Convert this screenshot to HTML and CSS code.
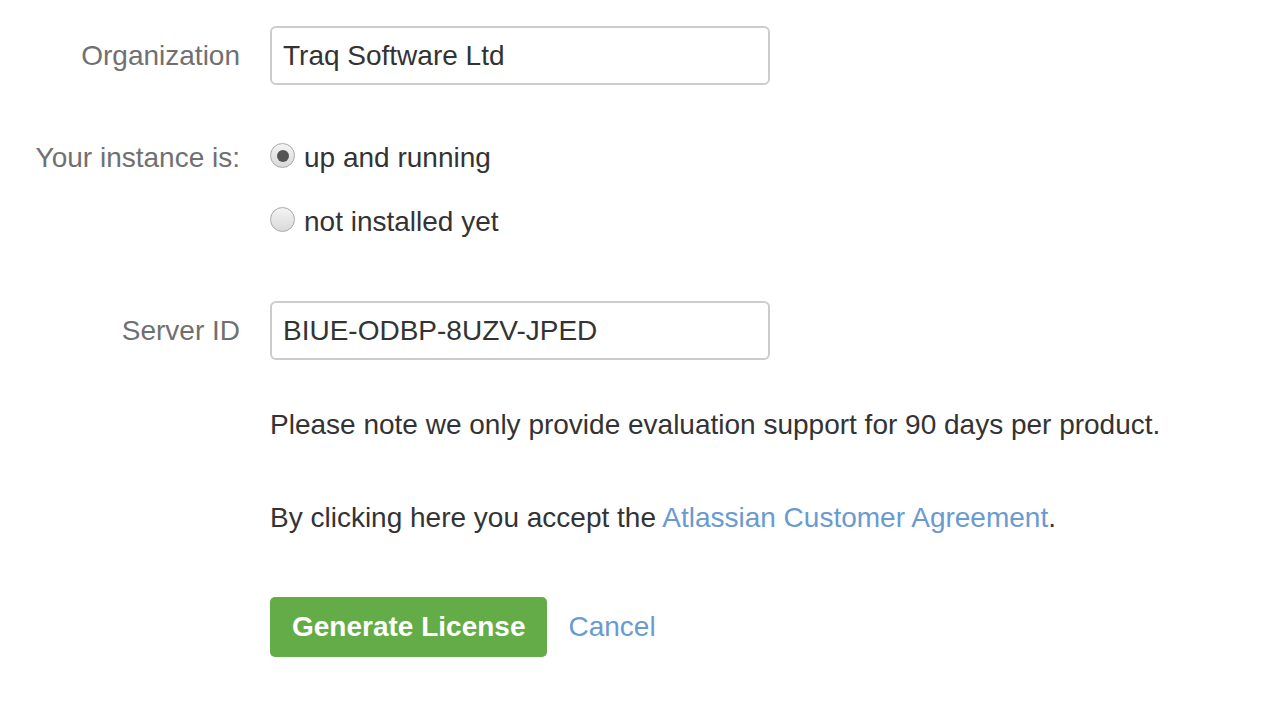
FILE: index.html
```html
<!DOCTYPE html>
<html>
<head>
<meta charset="utf-8">
<link rel="stylesheet" href="styles.css">
</head>
<body>
<form class="form">
  <div class="row row-org">
    <label class="label">Organization</label>
    <div class="field"><input class="input" type="text" value="Traq Software Ltd"></div>
  </div>
  <div class="row row-instance">
    <label class="label label-radio">Your instance is:</label>
    <div class="field radios">
      <label class="radio"><span class="dot checked"></span><span>up and running</span></label>
      <label class="radio"><span class="dot"></span><span>not installed yet</span></label>
    </div>
  </div>
  <div class="row row-server">
    <label class="label">Server ID</label>
    <div class="field"><input class="input" type="text" value="BIUE-ODBP-8UZV-JPED"></div>
  </div>
  <div class="row">
    <div class="label"></div>
    <div class="field">
      <p class="note">Please note we only provide evaluation support for 90 days per product.</p>
      <p class="note agree">By clicking here you accept the <a class="link" href="#">Atlassian Customer Agreement</a>.</p>
      <div class="actions">
        <button type="button" class="btn">Generate License</button>
        <a class="link cancel" href="#">Cancel</a>
      </div>
    </div>
  </div>
</form>
</body>
</html>
```
FILE: styles.css
```css
* { box-sizing: border-box; }
html, body { margin: 0; padding: 0; background: #fff; }
body {
  font-family: "Liberation Sans", Arial, sans-serif;
  font-size: 28px;
  color: #333;
}
.form { padding-top: 26px; }
.row { display: flex; gap: 30px; }
.label {
  width: 240px;
  flex: none;
  text-align: right;
  color: #707070;
  line-height: 59px;
}
.label-radio { line-height: 30px; padding-top: 0; }
.field { flex: none; }
.input {
  width: 500px;
  height: 59px;
  border: 2px solid #ccc;
  border-radius: 6px;
  padding: 0 11px;
  font: inherit;
  color: #333;
  outline: none;
}
.row-instance { margin-top: 58px; }
.radios { display: flex; flex-direction: column; gap: 34px; }
.radio { display: flex; align-items: center; gap: 9px; line-height: 30px; }
.dot {
  width: 25px; height: 25px;
  border-radius: 50%;
  border: 1px solid #a9a9a9;
  background: linear-gradient(#f4f4f4, #d9d9d9);
  display: flex; align-items: center; justify-content: center;
  margin-top: -5px;
}
.dot.checked::after {
  content: "";
  width: 12px; height: 12px; border-radius: 50%;
  background: #555;
}
.row-server { margin-top: 64px; }
.note { margin: 0; line-height: 30px; }
.note:first-child { margin-top: 50px; }
.agree { margin-top: 63px; }
.link { color: #6a9ad0; text-decoration: none; }
.actions { display: flex; align-items: center; gap: 21px; margin-top: 64px; }
.btn {
  height: 60px;
  padding: 0 22px;
  background: #64ac48;
  border: none;
  border-radius: 5px;
  color: #fff;
  font: inherit;
  font-weight: bold;
}
```
